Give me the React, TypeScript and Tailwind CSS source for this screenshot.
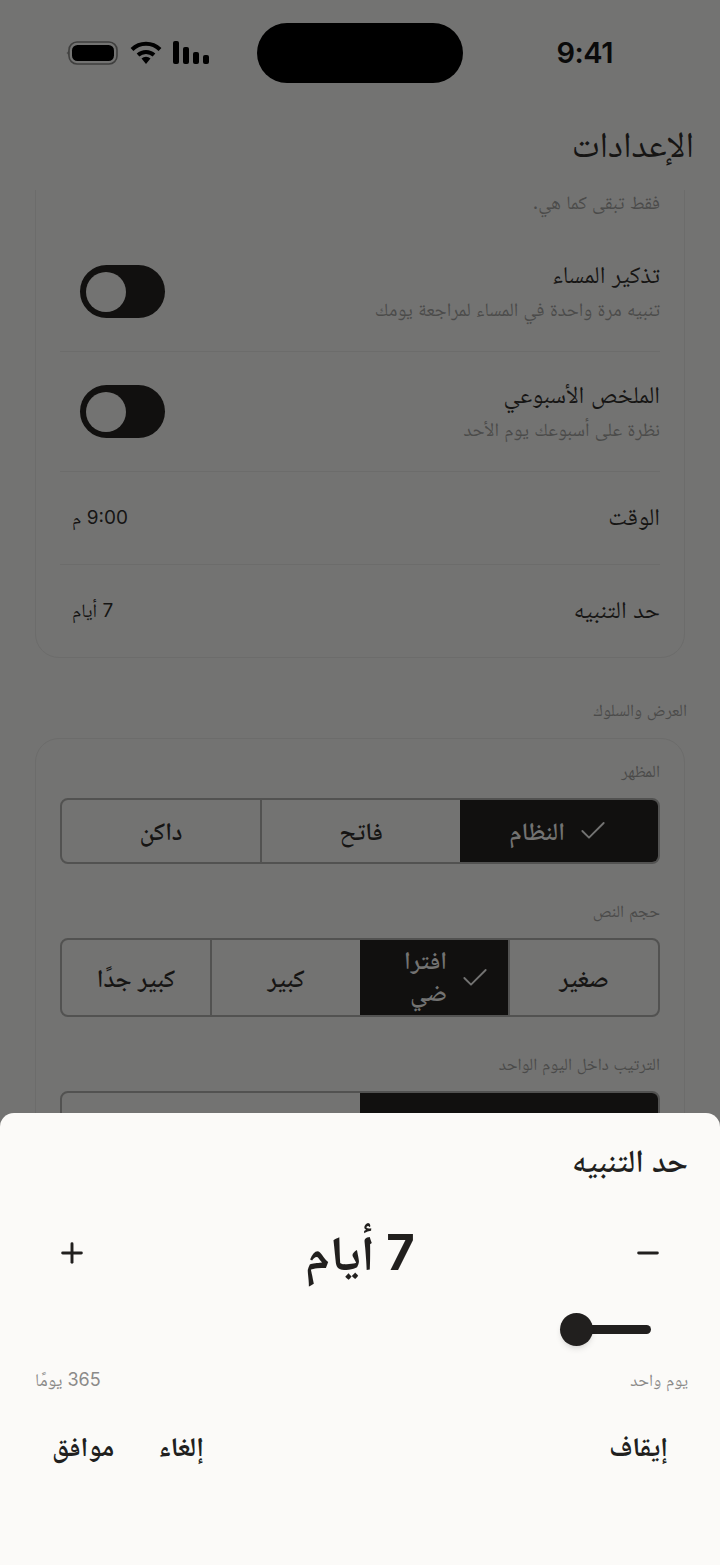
import { Check, Minus, Plus } from "lucide-react";

const FONT = "font-['Inter','Noto_Naskh_Arabic',serif]";

function StatusIcons() {
	return (
		<div dir="ltr" className="flex items-center">
			<svg width="52" height="24" viewBox="0 0 52 24" className="mr-[12px]">
				<path d="M0.5 12 L3 9.5 V14.5 Z" fill="#4e4e4d" />
				<rect x="3" y="1" width="48" height="22" rx="8" fill="none" stroke="#3f3f3e" strokeWidth="1.6" />
				<rect x="6" y="4" width="42" height="16" rx="5.5" fill="#000" />
			</svg>
			<svg width="32" height="24" viewBox="0 0 32 24" className="mr-[11px]">
				<path d="M2 8.5 A20 20 0 0 1 30 8.5" fill="none" stroke="#000" strokeWidth="4" />
				<path d="M8 14 A12 12 0 0 1 24 14" fill="none" stroke="#000" strokeWidth="4" />
				<path d="M11.5 17.5 L16 23 L20.5 17.5 A6.5 6.5 0 0 0 11.5 17.5 Z" fill="#000" />
			</svg>
			<svg width="36" height="24" viewBox="0 0 36 24">
				<rect x="0" y="0" width="6" height="23" rx="2" fill="#000" />
				<rect x="10" y="6" width="6" height="17" rx="2" fill="#000" />
				<rect x="20" y="11" width="6" height="12" rx="2" fill="#000" />
				<rect x="30" y="14" width="6" height="9" rx="2" fill="#000" />
			</svg>
		</div>
	);
}

function Toggle() {
	return (
		<div className="w-[85px] h-[53px] rounded-full bg-[#11100f] flex items-center justify-end pl-[6px]">
			<div className="w-[40px] h-[40px] rounded-full bg-[#737372] shrink-0" />
		</div>
	);
}

function ToggleRow({ title, sub }: { title: string; sub: string }) {
	return (
		<div className="h-[120px] flex items-center justify-between border-b border-[#6c6c6b]">
			<div>
				<div className="text-[24px] leading-[32px] text-[#161514]">{title}</div>
				<div className="text-[19px] leading-[30px] text-[#4b4b4a] mt-[4px]">{sub}</div>
			</div>
			<div className="ml-[20px]">
				<Toggle />
			</div>
		</div>
	);
}

function ValueRow({
	label,
	value,
	height,
	border,
}: {
	label: string;
	value: string;
	height: string;
	border?: boolean;
}) {
	return (
		<div className={`flex items-center justify-between ${height} ${border ? "border-b border-[#6c6c6b]" : ""}`}>
			<span className="text-[24px] leading-[32px] text-[#161514] -mt-[3px]">{label}</span>
			<span className="text-[19px] text-[#161514] pl-[12px]">{value}</span>
		</div>
	);
}

function Segment({
	items,
	selected,
	height,
	className,
}: {
	items: string[];
	selected: number;
	height: string;
	className?: string;
}) {
	return (
		<div className={`flex border-2 border-[#525251] rounded-[8px] overflow-hidden ${height} ${className ?? ""}`}>
			{items.map((item, i) => (
				<div
					key={item}
					className={`flex-1 basis-0 flex items-center justify-center gap-[12px] text-[25px] font-semibold ${
						i === selected ? "bg-[#11100f] text-[#737372]" : "text-[#161514]"
					} ${i < items.length - 1 && i !== selected ? "border-l-2 border-[#525251]" : ""}`}
				>
					{i === selected && <Check size={32} strokeWidth={1.4} className="shrink-0" />}
					<span
						className={`leading-[32px] whitespace-pre-line ${
							item.includes("\n") ? "w-[70px] text-start -mt-[4px]" : "text-center"
						}`}
					>
						{item}
					</span>
				</div>
			))}
		</div>
	);
}

function FieldLabel({ children }: { children: string }) {
	return <div className="text-[17px] leading-[24px] text-[#4b4b4a]">{children}</div>;
}

export default function App() {
	return (
		<div
			dir="rtl"
			className={`relative w-[720px] h-[1565px] overflow-hidden bg-[#737372] flex flex-col ${FONT}`}
		>
			<div className="h-[106px] shrink-0 pr-[107px] pl-[66px] flex items-center justify-between relative">
				<span className="text-[29px] font-semibold text-[#0a0a0a] tracking-[-0.5px]">9:41</span>
				<div className="absolute left-[257px] top-[23px] w-[206px] h-[60px] rounded-[30px] bg-black" />
				<StatusIcons />
			</div>

			<div className="h-[84px] shrink-0 pr-[26px] text-[36px] leading-[76px] text-[#161514]">الإعدادات</div>

			<div className="flex-1 overflow-hidden px-[35px]">
				<div className="-mt-[40px] border border-[#6c6c6b] rounded-[24px] px-[24px] pt-[40px]">
					<div className="text-[19px] leading-[24px] text-[#4b4b4a] pb-[17px]">فقط تبقى كما هي.</div>
					<ToggleRow title="تذكير المساء" sub="تنبيه مرة واحدة في المساء لمراجعة يومك" />
					<ToggleRow title="الملخص الأسبوعي" sub="نظرة على أسبوعك يوم الأحد" />
					<ValueRow label="الوقت" value="9:00 م" height="h-[93px]" border />
					<ValueRow label="حد التنبيه" value="7 أيام" height="h-[92px]" />
				</div>

				<div className="text-[17px] leading-[24px] text-[#4b4b4a] mt-[40px] -mr-[2px]">العرض والسلوك</div>

				<div className="mt-[16px] border border-[#6c6c6b] rounded-[24px] px-[24px] pt-[20px] pb-[24px]">
					<FieldLabel>المظهر</FieldLabel>
					<Segment className="mt-[15px]" height="h-[66px]" items={["النظام", "فاتح", "داكن"]} selected={0} />
					<div className="mt-[35px]">
						<FieldLabel>حجم النص</FieldLabel>
					</div>
					<Segment
						className="mt-[15px]"
						height="h-[79px]"
						items={["صغير", "افترا\nضي", "كبير", "كبير جدًا"]}
						selected={1}
					/>
					<div className="mt-[35px]">
						<FieldLabel>الترتيب داخل اليوم الواحد</FieldLabel>
					</div>
					<Segment className="mt-[15px]" height="h-[72px]" items={["الأحدث أولا", "الأقدم أولاً"]} selected={0} />
				</div>
			</div>

			<div className="absolute inset-x-0 bottom-0 h-[452px] bg-[#fbfaf8] rounded-t-[14px] px-[32px] pt-[28px] text-[#211f1e]">
				<div className="text-[32px] leading-[40px] font-semibold">حد التنبيه</div>
				<div className="mt-[42px] flex items-center justify-between px-[24px] h-[60px]">
					<Minus size={32} strokeWidth={2.2} />
					<span className="text-[49px] font-bold leading-[60px]">7 أيام</span>
					<Plus size={32} strokeWidth={2.2} />
				</div>
				<div className="mt-[28px] h-[36px] flex items-center pr-[37px]">
					<div className="relative w-[75px] h-[9px] rounded-full bg-[#211f1e]">
						<div className="absolute -left-[16px] -top-[12px] w-[33px] h-[33px] rounded-full bg-[#211f1e] shadow-md" />
					</div>
				</div>
				<div className="mt-[21px] flex items-center justify-between pl-[3px] text-[#8b8a89] text-[17px] leading-[24px]">
					<span>يوم واحد</span>
					<span className="text-[18px]">365 يومًا</span>
				</div>
				<div className="mt-[38px] flex items-center justify-between px-[20px] text-[27px] font-bold leading-[34px]">
					<span>إيقاف</span>
					<div className="flex gap-[44px]">
						<span>إلغاء</span>
						<span>موافق</span>
					</div>
				</div>
			</div>
		</div>
	);
}
